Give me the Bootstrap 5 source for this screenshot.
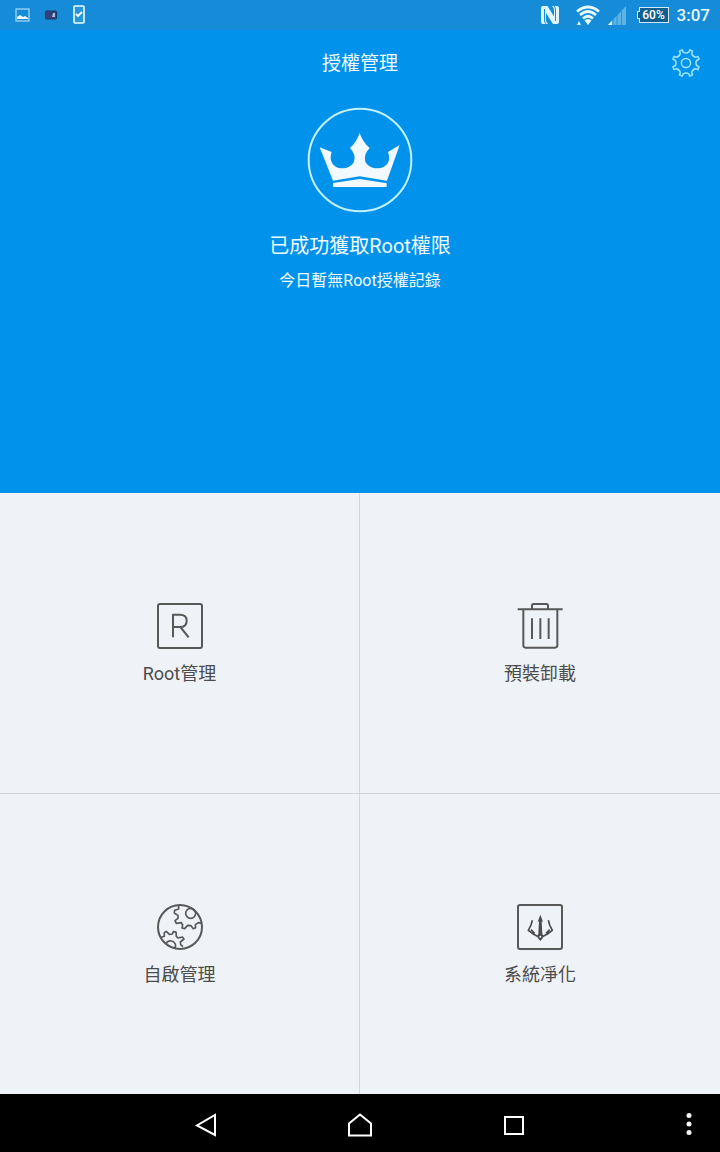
<!DOCTYPE html>
<html lang="zh-Hant">
<head>
<meta charset="utf-8">
<meta name="viewport" content="width=device-width, initial-scale=1">
<title>授權管理</title>
<link href="https://cdn.jsdelivr.net/npm/bootstrap@5.3.0/dist/css/bootstrap.min.css" rel="stylesheet">
<style>
  body { font-family: Roboto, "Noto Sans CJK TC", sans-serif; background: #eff2f7; }
  svg { display: block; flex: none; }
  .status-bar { height: 30px; background: #168bd8; color: #e4f7ff; font-size: 17px; line-height: 32px; }
  .status-right { padding-right: 10px; }
  .clock { font-weight: 500; }
  .battery { margin: 0 8px 0 13px; font-size: 12px; font-weight: 500; line-height: 14px; width: 30px; height: 16px; border: 1px solid #cdebfa; background: #12608f; color: #fff; }
  .battery::before { content: ""; position: absolute; left: -3px; top: 3px; width: 3px; height: 8px; border: 1px solid #cdebfa; border-right: 0; background: #12608f; }
  .hero { flex: 10 1 0; background: #0192ec; color: #f0fbff; }
  .title-bar { height: 66px; }
  .title-bar h1 { font-size: 19px; line-height: 28px; padding-top: 2px; }
  .crown { margin-top: 11px; }
  .headline { font-size: 20px; line-height: 30px; margin-top: 18px; }
  .subline { font-size: 16px; line-height: 24px; margin-top: 8px; }
  .tiles { flex: 13 1 0; }
  .tile { color: #4c4c4c; font-size: 18px; line-height: 26px; gap: 12px; padding-top: 4px; border-color: #d3d6da !important; }
  .tile svg { fill: none; stroke: #585858; stroke-width: 6; stroke-linejoin: round; }
  .nav-bar { height: 58px; background: #000; padding-top: 3px; }
  .nav-keys { width: 64%; }
</style>
</head>
<body>
<div class="d-flex flex-column min-vh-100">
  <div class="status-bar d-flex align-items-center">
    <div class="d-flex align-items-center ps-3 flex-grow-1">
      <svg class="me-3" width="12" height="14" viewBox="1 0 12 14" overflow="visible"><rect x="1" y="1" width="13" height="12" fill="none" stroke="#a9def6" stroke-width="1.2"/><path d="M2 11V9l3-2 3 2 2-1 3 2v1z" fill="#f2fcff"/></svg>
      <svg width="14" height="10" viewBox="0 0 14 10"><path d="M0 5l2-2v4zM14 5l-2-2v4z" fill="#2a78a8"/><rect x="1.500" y="1" width="11" height="8" rx="1" fill="#34427b" stroke="#183a60"/><path d="M9 3h2v4H8z" fill="#a6b8df"/></svg>
      <svg class="ms-3" width="12" height="20" viewBox="1 0 12 20" overflow="visible"><rect x="1" y="1" width="10" height="17" rx="1" fill="#2796d9" stroke="#edfbff" stroke-width="1.600"/><path d="M3 9l2 2 4-4" fill="none" stroke="#fff" stroke-width="1.800"/></svg>
    </div>
    <div class="status-right d-flex align-items-center">
      <svg width="20" height="20" viewBox="0 0 20 20"><path d="M3 1H7.500L14 11.500V5Q14 3 12 1H17Q19 1 19 3V17Q19 19 17 19H13L6 8V15Q6 17 8 19H3Q1 19 1 17V3Q1 1 3 1Z" fill="#dff6ff"/><path d="M4.500 4V15Q4.500 17.500 6 19M15.500 16V5Q15.500 2.500 14 1" fill="none" stroke="#168bd8"/></svg>
      <svg class="ms-3" width="24" height="20" viewBox="0 0 24 20"><g fill="none" stroke="#e6f9ff" stroke-width="2.800"><path d="M1 6.500Q12-2.500 23 6.500"/><path d="M4 10Q12 3 20 10"/><path d="M7 13.500Q12 9 17 13.500"/></g><path d="M8.500 15.500Q12 12.500 15.500 15.500L12 20zM1 20l2-4 2 4z" fill="#e6f9ff"/></svg>
      <svg class="ms-2" width="18" height="19" viewBox="0 0 18 19"><path d="M18 0v19H0z" fill="#59b3e6"/><path d="M4 14.800V19H0z" fill="#eaffff"/><path d="M5 12v7M9 8v11M13.500 4v15" stroke="#168bd8" stroke-width=".7"/></svg>
      <div class="battery position-relative text-center"><span class="d-block">60%</span></div>
      <span class="clock">3:07</span>
    </div>
  </div>

  <header class="hero d-flex flex-column align-items-center text-center">
    <div class="title-bar w-100 position-relative d-flex align-items-center justify-content-center">
      <h1 class="fw-normal m-0">授權管理</h1>
      <button type="button" class="btn border-0 p-1 position-absolute end-0 me-3" aria-label="設定">
        <svg width="28" height="28" viewBox="-14 -14 28 28" overflow="visible" fill="none" stroke="#9fe6fc" stroke-width="1.500" stroke-linejoin="round">
          <defs><path id="notch" d="M-5.200-12.500L-3.700-13.100-2.800-10.800Q0-9 2.800-10.800L3.700-13.100 5.200-12.500"/></defs>
          <use href="#notch"/><use href="#notch" transform="rotate(45)"/><use href="#notch" transform="rotate(90)"/><use href="#notch" transform="rotate(135)"/><use href="#notch" transform="rotate(180)"/><use href="#notch" transform="rotate(225)"/><use href="#notch" transform="rotate(270)"/><use href="#notch" transform="rotate(315)"/>
          <circle r="4.600"/>
        </svg>
      </button>
    </div>
    <svg class="crown" width="106" height="106" viewBox="52 22 318 318">
      <circle cx="211" cy="181" r="154" fill="none" stroke="#c4f1ff" stroke-width="6"/>
      <path d="M90 143L126 157Q120 175 126 187C136 213 180 212 193 186Q200 165 181 145Q201 127 210 100Q219 127 240 145Q221 165 227 186C241 212 284 213 296 187Q301 174 295 157L330 136L292 243L210 230L130 243ZM130 250L210 238L291 251V262H130Z" fill="#f2faff"/>
    </svg>
    <p class="headline mb-0">已成功獲取Root權限</p>
    <p class="subline mb-0">今日暫無Root授權記錄</p>
  </header>

  <main class="tiles row row-cols-2 g-0">
    <a href="#root" class="tile col d-flex flex-column align-items-center justify-content-center text-decoration-none border-end border-bottom">
      <svg width="46" height="46" viewBox="79 38 138 138"><rect x="82" y="41" width="132" height="132" rx="6"/><path d="M127 141V73H148Q168 73 168 91Q168 110 148 110H127M149 110L174 141"/></svg>
      <span>Root管理</span>
    </a>
    <a href="#uninstall" class="tile col d-flex flex-column align-items-center justify-content-center text-decoration-none border-bottom">
      <svg width="46" height="46" viewBox="79 38 138 138"><path d="M81 57H216M124 56V46Q124 41 129 41H167Q172 41 172 46V56M98 58V165Q98 172 105 172H193Q200 172 200 165V58M124 84V146M149 84V146M174 84V146"/></svg>
      <span>預裝卸載</span>
    </a>
    <a href="#autostart" class="tile col d-flex flex-column align-items-center justify-content-center text-decoration-none border-end">
      <svg width="46" height="46" viewBox="79 38 138 138"><circle cx="148" cy="107" r="66"/><g stroke-width="5"><circle cx="180" cy="66" r="15"/><path d="M144 43V53L132 57L131 65L142 72L142 81L133 88L137 96L152 94L156 101L154 110L162 112L171 102L181 103L188 112L195 109L194 100L203 94L214 96M92 138L101 135L101 124L107 120L116 129L125 128L128 121L136 122L137 135L142 140L155 137L160 143L149 152L150 160L157 166M106 157Q112 147 122 149Q133 151 135 163L132 171"/></g></svg>
      <span>自啟管理</span>
    </a>
    <a href="#clean" class="tile col d-flex flex-column align-items-center justify-content-center text-decoration-none">
      <svg width="46" height="46" viewBox="79 38 138 138"><rect x="82" y="41" width="132" height="132" rx="6"/><path d="M149 70L157 92L153 90L155 127Q161 134 156 141L149 149L142 141Q137 134 143 127L145 90L141 92Z" fill="#4b4b4b" stroke="none"/><path d="M125 87L121 101L113 117L126 127L145 137M173 87L177 101L185 117L172 127L153 137M121 115L132 127M177 115L166 127" stroke="#4b4b4b" stroke-width="5"/><circle cx="149" cy="136" r="3" fill="#eff2f7" stroke="none"/></svg>
      <span>系統凈化</span>
    </a>
  </main>

  <nav class="nav-bar d-flex align-items-center justify-content-center position-relative">
    <div class="nav-keys d-flex justify-content-around">
      <button type="button" class="btn border-0 p-3" aria-label="返回"><svg width="24" height="24" viewBox="0 0 24 24"><path d="M21 2V22L3 12.500Z" fill="none" stroke="#fff" stroke-width="2"/></svg></button>
      <button type="button" class="btn border-0 p-3" aria-label="主畫面"><svg width="24" height="24" viewBox="0 0 24 24"><path d="M1 22.500V10.500L12 1.500L23 10.500V22.500Z" fill="none" stroke="#fff" stroke-width="2"/></svg></button>
      <button type="button" class="btn border-0 p-3" aria-label="最近使用"><svg width="24" height="24" viewBox="0 0 24 24"><rect x="3" y="4" width="18" height="17" fill="none" stroke="#fff" stroke-width="2"/></svg></button>
    </div>
    <button type="button" class="btn border-0 p-2 position-absolute end-0 me-3" aria-label="更多"><svg width="14" height="24" viewBox="0 0 14 24" fill="#f5f5f5"><circle cx="7" cy="2.500" r="2.500"/><circle cx="7" cy="11" r="2.500"/><circle cx="7" cy="19.500" r="2.500"/></svg></button>
  </nav>
</div>
<script src="https://cdn.jsdelivr.net/npm/bootstrap@5.3.0/dist/js/bootstrap.bundle.min.js"></script>
</body>
</html>
